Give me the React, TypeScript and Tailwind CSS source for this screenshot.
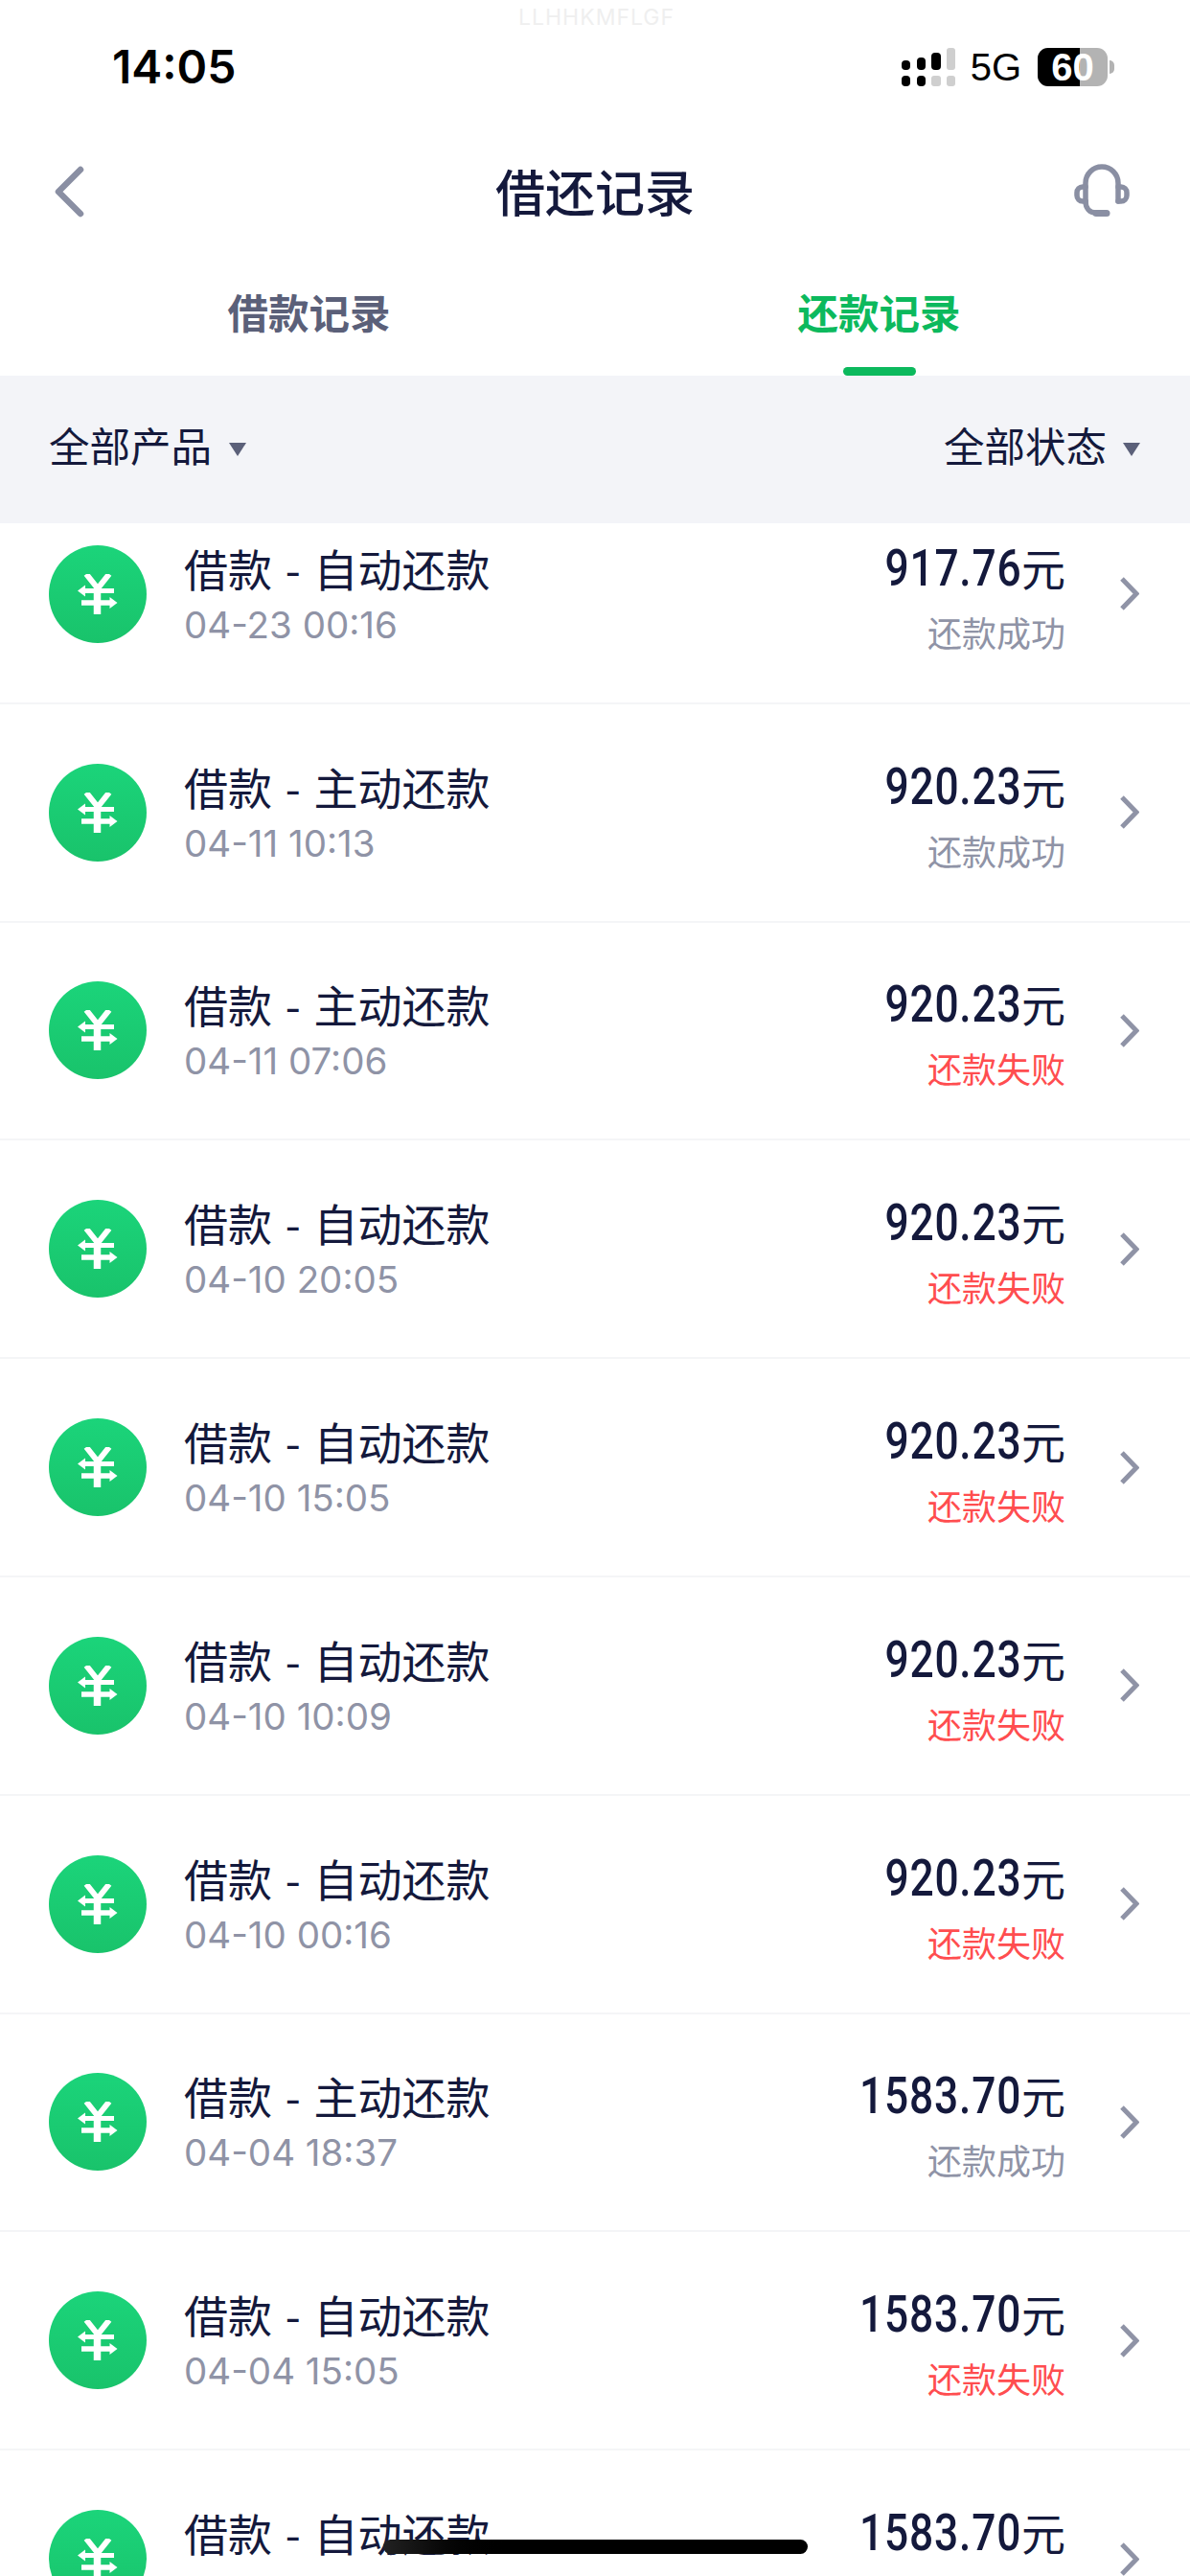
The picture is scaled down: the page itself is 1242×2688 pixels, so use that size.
const rows = [
  { type: "自动", time: "04-23 00:16", amount: "917.76", ok: true },
  { type: "主动", time: "04-11 10:13", amount: "920.23", ok: true },
  { type: "主动", time: "04-11 07:06", amount: "920.23", ok: false },
  { type: "自动", time: "04-10 20:05", amount: "920.23", ok: false },
  { type: "自动", time: "04-10 15:05", amount: "920.23", ok: false },
  { type: "自动", time: "04-10 10:09", amount: "920.23", ok: false },
  { type: "自动", time: "04-10 00:16", amount: "920.23", ok: false },
  { type: "主动", time: "04-04 18:37", amount: "1583.70", ok: true },
  { type: "自动", time: "04-04 15:05", amount: "1583.70", ok: false },
  { type: "自动", time: "04-04 10:09", amount: "1583.70", ok: false },
];

const cjk = "font-['Noto_Sans_CJK_SC','Noto_Sans',sans-serif]";

const Signal = () => (
  <svg width="56" height="40" viewBox="0 0 56 40">
    <rect x="0" y="13" width="9" height="10" rx="4" fill="#000" />
    <rect x="16" y="10" width="9" height="13" rx="4" fill="#000" />
    <rect x="31" y="5" width="10" height="18" rx="4" fill="#000" />
    <rect x="47" y="0" width="9" height="23" rx="3" fill="#cfcfcf" />
    <rect x="0" y="29" width="9" height="11" rx="4" fill="#000" />
    <rect x="16" y="29" width="9" height="11" rx="4" fill="#000" />
    <rect x="31" y="29" width="10" height="11" rx="3" fill="#cfcfcf" />
    <rect x="47" y="29" width="9" height="11" rx="3" fill="#cfcfcf" />
  </svg>
);

const Battery = () => (
  <div className="flex items-center">
    <div className="relative w-[73px] h-[40px] rounded-[11px] bg-[#b3b3b3] flex items-center justify-center">
      <div className="absolute left-0 top-0 bottom-0 w-[44px] rounded-l-[11px] bg-black" />
      <span className="relative text-white text-[40px] leading-none font-bold font-['Liberation_Sans',sans-serif]">60</span>
    </div>
    <div className="ml-[2px] w-[5px] h-[14px] rounded-r-full bg-[#b3b3b3]" />
  </div>
);

const Headset = () => (
  <svg width="62" height="60" viewBox="0 0 62 60" fill="none" stroke="#8a8fa3" strokeWidth="5.5" strokeLinecap="round">
    <path d="M15 40V21a17 17 0 0 1 34 0v19" />
    <path d="M15 25h-3a6 6 0 0 0-6 6v3a6 6 0 0 0 6 6h3" />
    <path d="M49 25h3a6 6 0 0 1 6 6v3a6 6 0 0 1-6 6h-3" />
    <path d="M15 40c0 7 4 12 11 12" />
    <path d="M26 52.500h11" strokeWidth="7" />
  </svg>
);

const YuanIcon = () => (
  <div className="w-[102px] h-[102px] rounded-full bg-gradient-to-b from-[#1bd47a] to-[#19c36b] flex items-center justify-center shrink-0">
    <svg width="42" height="42" viewBox="0 0 42 42" fill="none" stroke="#fff" strokeWidth="6">
      <path d="M9 0l12 15L33 0" />
      <path d="M20.500 15v27" strokeWidth="7.500" />
      <path d="M6 17.500h32" strokeWidth="5" />
      <path d="M4 30h31" strokeWidth="5.500" />
      <path d="M0 17.500l8-6v12z" fill="#fff" stroke="none" />
      <path d="M41.500 30l-8-6v12z" fill="#fff" stroke="none" />
    </svg>
  </div>
);

const Caret = () => (
  <div className="w-0 h-0 border-x-[9px] border-x-transparent border-t-[14px] border-t-[#5b6079]" />
);

const Row = ({ type, time, amount, ok }: (typeof rows)[number]) => (
  <div className="h-[227.8px] shrink-0 border-b-2 border-[#f4f5f7] pl-[51px] pr-[53px] flex items-center">
    <YuanIcon />
    <div className="ml-[39px] flex-1 -mt-[2px]">
      <div className={`${cjk} text-[46px] leading-[58px] [word-spacing:3.5px] text-[#14193c]`}>借款 - {type}还款</div>
      <div className="font-['Inter',sans-serif] text-[38.5px] leading-[46px] mt-[8px] text-[#8f93a6]">{time}</div>
    </div>
    <div className="mt-[3px] flex flex-col items-end">
      <div className="flex items-baseline text-[#14193c]">
        <span className="inline-block origin-right scale-x-[0.82] font-['Roboto',sans-serif] font-medium text-[54px] leading-[60px] tracking-[1px]">
          {amount}
        </span>
        <span className={`${cjk} text-[46px] leading-[60px]`}>元</span>
      </div>
      <div className={`${cjk} text-[36px] leading-[46px] mt-[13px] ${ok ? "text-[#8f93a6]" : "text-[#ff4d4f]"}`}>
        {ok ? "还款成功" : "还款失败"}
      </div>
    </div>
    <svg width="20" height="35" viewBox="0 0 20 35" fill="none" stroke="#8f93a6" strokeWidth="5" className="ml-[57px] shrink-0">
      <path d="M2 2l15 15.500L2 33" />
    </svg>
  </div>
);

export default function App() {
  return (
    <div className="relative w-[1242px] h-[2688px] bg-white overflow-hidden flex flex-col">
      {/* Status bar */}
      <div className="relative h-[146px] shrink-0 pl-[117px] pr-[79px] pt-[50px] flex justify-between items-start">
        <span className="absolute left-[541px] top-[4px] text-[23px] leading-[28px] tracking-[1px] text-[#efefef] font-['Inter',sans-serif]">LLHHKMFLGF</span>
        <span className="font-['Inter',sans-serif] font-semibold text-[48px] leading-[40px] text-black">14:05</span>
        <div className="flex items-center">
          <Signal />
          <span className="ml-[16px] mr-[17px] font-['Liberation_Sans',sans-serif] text-[40px] leading-[40px] text-black">5G</span>
          <Battery />
        </div>
      </div>
      {/* Nav */}
      <div className="h-[108px] shrink-0 pl-[53px] pr-[62px] flex items-center justify-between">
        <div className="flex-1">
          <svg width="36" height="54" viewBox="0 0 36 54" fill="none" stroke="#8a8fa3" strokeWidth="6.5" strokeLinecap="round" strokeLinejoin="round">
            <path d="M31 4L8 27l23 23" />
          </svg>
        </div>
        <span className={`${cjk} font-medium text-[52px] leading-none -mt-[2px] ml-[9px] text-[#14193c]`}>借还记录</span>
        <div className="flex-1 flex justify-end">
          <Headset />
        </div>
      </div>
      {/* Tabs */}
      <div className="h-[138px] shrink-0 grid grid-cols-2 pl-[25px] pr-[27px]">
        <div className="flex items-center justify-center pt-[4px]">
          <span className={`${cjk} font-bold text-[42.5px] text-[#5b6079]`}>借款记录</span>
        </div>
        <div className="relative flex items-center justify-center pt-[4px]">
          <span className={`${cjk} font-bold text-[42.5px] text-[#0cb95d]`}>还款记录</span>
          <div className="absolute bottom-0 left-1/2 -translate-x-1/2 w-[76px] h-[9px] rounded-full bg-[#0cb95d]" />
        </div>
      </div>
      {/* Filters */}
      <div className="h-[154px] shrink-0 bg-[#f3f4f8] pl-[51px] pr-[52px] flex items-center justify-between">
        <div className="flex items-center gap-[18px]">
          <span className={`${cjk} text-[42.5px] mb-[10px] text-[#14193c]`}>全部产品</span>
          <Caret />
        </div>
        <div className="flex items-center gap-[17px]">
          <span className={`${cjk} text-[42.5px] mb-[10px] text-[#14193c]`}>全部状态</span>
          <Caret />
        </div>
      </div>
      {/* List, scrolled so the first row is cut off */}
      <div className="flex-1 overflow-hidden">
        <div className="-mt-[39px] flex flex-col">
          {rows.map((r, i) => (
            <Row key={i} {...r} />
          ))}
        </div>
      </div>
      {/* Home indicator */}
      <div className="absolute left-[400px] top-[2650px] w-[443px] h-[15px] rounded-full bg-gradient-to-r from-[#222] to-black to-30%" />
    </div>
  );
}
